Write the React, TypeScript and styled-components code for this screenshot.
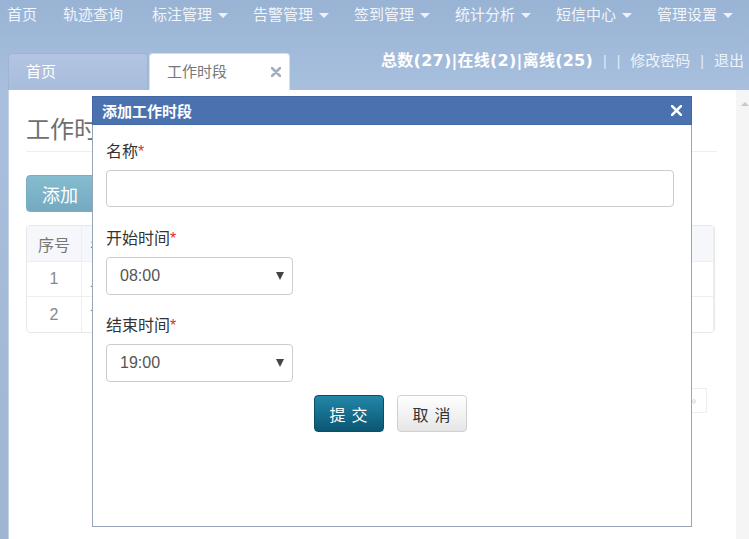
import React from "react";
import styled, { createGlobalStyle } from "styled-components";

const GlobalStyle = createGlobalStyle`
  html, body { margin: 0; padding: 0; }
  body {
    font-family: "Liberation Sans", "Noto Sans CJK SC", sans-serif;
    background: #a3bbda;
  }
  * { box-sizing: border-box; }
`;

const Page = styled.div`
  position: relative;
  width: 749px;
  height: 539px;
  overflow: hidden;
  display: flex;
  flex-direction: column;
  background: linear-gradient(#99b3d4, #a8c0de 90px, #a0b5d1);
`;

const Header = styled.header`
  height: 90px;
  display: flex;
  flex-direction: column;
`;

const NavBar = styled.nav`
  height: 30px;
  display: flex;
  align-items: center;
  padding-left: 7px;
  gap: 25px;
`;

const NavItem = styled.div<{ $extra?: number }>`
  display: flex;
  align-items: center;
  gap: 6px;
  color: #f1f5fb;
  font-size: 15px;
  line-height: 20px;
  margin-right: ${(p) => p.$extra ?? 0}px;
  white-space: nowrap;
`;

const Caret = styled.span`
  width: 0;
  height: 0;
  border-left: 5px solid transparent;
  border-right: 5px solid transparent;
  border-top: 5px solid #eef2f8;
  margin-top: 1px;
`;

const TabStrip = styled.div`
  height: 60px;
  display: flex;
  align-items: flex-end;
  padding-left: 8px;
`;

const Tab = styled.div<{ $active?: boolean }>`
  width: ${(p) => (p.$active ? 141 : 140)}px;
  height: 37px;
  margin-right: 1px;
  padding: 0 8px 0 17px;
  display: flex;
  align-items: center;
  justify-content: space-between;
  border-radius: 4px 4px 0 0;
  border: 1px solid ${(p) => (p.$active ? "#d6dfec" : "#9fb4d3")};
  border-bottom: none;
  background: ${(p) => (p.$active ? "#ffffff" : "linear-gradient(#b2c4e1, #a8bcdc)")};
  color: ${(p) => (p.$active ? "#777777" : "#ffffff")};
  font-size: 15px;
  line-height: 20px;
`;

const Status = styled.div`
  align-self: flex-start;
  margin: 22px 5px 0 auto;
  display: flex;
  align-items: center;
  line-height: 18px;
  color: #f2f6fb;
  font-size: 15px;
  white-space: nowrap;
`;

const Counts = styled.span`
  font-family: "DejaVu Sans", "Noto Sans CJK SC", sans-serif;
  font-weight: bold;
  font-size: 16px;
  letter-spacing: 0.25px;
  color: #ffffff;
`;

const Sep = styled.span<{ $tight?: boolean }>`
  margin: 0 10px 0 ${(p) => (p.$tight ? 0 : 10)}px;
  color: #e4ebf5;
  font-size: 14px;
`;

const Link = styled.span`
  color: #eef3f9;
`;

const Main = styled.main`
  flex: 1;
  display: flex;
  margin-left: 8px;
  background: #ffffff;
  border-left: 1px solid #c7d3e4;
`;

const Content = styled.div`
  flex: 1;
  padding: 0 19px 0 17px;
  display: flex;
  flex-direction: column;
`;

const Title = styled.h2`
  margin: 24px 0 0;
  padding-bottom: 5px;
  border-bottom: 1px solid #eeeeee;
  font-size: 24px;
  line-height: 32px;
  font-weight: normal;
  color: #6f6f6f;
`;

const AddButton = styled.button`
  align-self: flex-start;
  margin-top: 23px;
  width: 72px;
  height: 37px;
  padding: 0 15px;
  border: 1px solid #7aaec2;
  border-radius: 4px;
  background: linear-gradient(#86bccf, #74aac0);
  color: #ffffff;
  font-family: inherit;
  font-size: 18px;
  text-align: left;
`;

const Table = styled.table`
  margin-top: 13px;
  width: 689px;
  border-collapse: separate;
  border-spacing: 0;
  border: 1px solid #e8e8e8;
  border-radius: 4px;
  font-size: 16px;
`;

const Th = styled.th<{ $w?: number }>`
  height: 36px;
  width: ${(p) => (p.$w ? `${p.$w}px` : "auto")};
  background: #f5f7fa;
  color: #777777;
  font-weight: normal;
  text-align: ${(p) => (p.$w ? "center" : "left")};
  padding: 0 8px;
  border-right: 1px solid #eeeeee;
  border-bottom: 1px solid #eeeeee;
`;

const Td = styled.td<{ $center?: boolean; $last?: boolean }>`
  height: 35px;
  color: #888888;
  text-align: ${(p) => (p.$center ? "center" : "left")};
  padding: 0 8px;
  border-right: 1px solid #eeeeee;
  border-bottom: ${(p) => (p.$last ? "none" : "1px solid #eeeeee")};
`;

const PagerRow = styled.div`
  margin-top: 55px;
  display: flex;
  justify-content: flex-end;
  padding-right: 10px;
`;

const PageItem = styled.span`
  width: 28px;
  height: 25px;
  border: 1px solid #eeeeee;
  margin-left: -1px;
  display: flex;
  align-items: center;
  justify-content: center;
  color: #d6d6d6;
  font-size: 12px;
`;

const Scrollbar = styled.div`
  width: 13px;
  background: #f5f5f5;
  display: flex;
  justify-content: flex-end;
  padding-top: 12px;
`;

const ScrollArrow = styled.span`
  width: 0;
  height: 0;
  border-left: 4px solid transparent;
  border-right: 4px solid transparent;
  border-bottom: 4px solid #c9c9c9;
`;

const Modal = styled.div`
  position: absolute;
  left: 92px;
  top: 96px;
  width: 600px;
  height: 431px;
  background: #ffffff;
  border: 1px solid #98a6ba;
  display: flex;
  flex-direction: column;
`;

const ModalHeader = styled.div`
  height: 29px;
  margin: -1px -1px 0;
  padding: 0 9px 0 9px;
  background: #4b72af;
  border: 1px solid #4068a6;
  display: flex;
  align-items: center;
  justify-content: space-between;
  color: #ffffff;
  font-weight: bold;
  font-size: 15px;
`;

const ModalBody = styled.div`
  padding: 17px 17px 0 13px;
  display: flex;
  flex-direction: column;
`;

const Group = styled.div<{ $gap: number }>`
  margin-bottom: ${(p) => p.$gap}px;
`;

const Label = styled.label`
  display: block;
  font-size: 16px;
  line-height: 20px;
  color: #333333;
  margin-bottom: 8px;
`;

const Req = styled.span`
  color: #e0302c;
`;

const Input = styled.div`
  height: 37px;
  border: 1px solid #cccccc;
  border-radius: 4px;
`;

const Select = styled.div`
  width: 187px;
  height: 38px;
  border: 1px solid #cccccc;
  border-radius: 4px;
  padding: 0 8px 0 13px;
  display: flex;
  align-items: center;
  justify-content: space-between;
  color: #555555;
  font-size: 16px;
`;

const SelectArrow = styled.span`
  width: 0;
  height: 0;
  border-left: 4px solid transparent;
  border-right: 4px solid transparent;
  border-top: 8px solid #444444;
`;

const Actions = styled.div`
  margin-top: 13px;
  display: flex;
  justify-content: center;
  gap: 13px;
`;

const Btn = styled.button<{ $primary?: boolean }>`
  width: 70px;
  height: 37px;
  border-radius: 4px;
  font-family: inherit;
  font-size: 16px;
  letter-spacing: 6px;
  padding: 0 0 0 6px;
  border: 1px solid ${(p) => (p.$primary ? "#0b4e66" : "#d0d0d0")};
  background: ${(p) =>
    p.$primary ? "linear-gradient(#2386a8, #0b5672)" : "linear-gradient(#ffffff, #e6e6e6)"};
  color: ${(p) => (p.$primary ? "#ffffff" : "#333333")};
`;

const Cross = ({ size, color, width }: { size: number; color: string; width: number }) => (
  <svg width={size} height={size} viewBox="0 0 10 10">
    <path d="M1 1 L9 9 M9 1 L1 9" stroke={color} strokeWidth={width} strokeLinecap="round" />
  </svg>
);

const navItems: { label: string; drop?: boolean; extra?: number }[] = [
  { label: "首页", extra: 1 },
  { label: "轨迹查询", extra: 4 },
  { label: "标注管理", drop: true },
  { label: "告警管理", drop: true },
  { label: "签到管理", drop: true },
  { label: "统计分析", drop: true },
  { label: "短信中心", drop: true },
  { label: "管理设置", drop: true },
];

export default function App() {
  return (
    <>
      <GlobalStyle />
      <Page>
        <Header>
          <NavBar>
            {navItems.map((n) => (
              <NavItem key={n.label} $extra={n.extra}>
                {n.label}
                {n.drop && <Caret />}
              </NavItem>
            ))}
          </NavBar>
          <TabStrip>
            <Tab>首页</Tab>
            <Tab $active>
              工作时段
              <Cross size={10} color="#a3afc0" width={2.6} />
            </Tab>
            <Status>
              <Counts>总数(27)|在线(2)|离线(25)</Counts>
              <Sep>|</Sep>
              <Sep $tight>|</Sep>
              <Link>修改密码</Link>
              <Sep>|</Sep>
              <Link>退出</Link>
            </Status>
          </TabStrip>
        </Header>
        <Main>
          <Content>
            <Title>工作时段</Title>
            <AddButton>添加</AddButton>
            <Table>
              <thead>
                <tr>
                  <Th $w={55}>序号</Th>
                  <Th>名称</Th>
                </tr>
              </thead>
              <tbody>
                <tr>
                  <Td $center>1</Td>
                  <Td>上午</Td>
                </tr>
                <tr>
                  <Td $center $last>2</Td>
                  <Td $last>下午</Td>
                </tr>
              </tbody>
            </Table>
            <PagerRow>
              <PageItem>«</PageItem>
              <PageItem>1</PageItem>
              <PageItem>»</PageItem>
            </PagerRow>
          </Content>
          <Scrollbar>
            <ScrollArrow />
          </Scrollbar>
        </Main>
        <Modal>
          <ModalHeader>
            添加工作时段
            <Cross size={11} color="#ffffff" width={2.4} />
          </ModalHeader>
          <ModalBody>
            <Group $gap={22}>
              <Label>
                名称<Req>*</Req>
              </Label>
              <Input />
            </Group>
            <Group $gap={21}>
              <Label>
                开始时间<Req>*</Req>
              </Label>
              <Select>
                08:00
                <SelectArrow />
              </Select>
            </Group>
            <Group $gap={0}>
              <Label>
                结束时间<Req>*</Req>
              </Label>
              <Select>
                19:00
                <SelectArrow />
              </Select>
            </Group>
            <Actions>
              <Btn $primary>提交</Btn>
              <Btn>取消</Btn>
            </Actions>
          </ModalBody>
        </Modal>
      </Page>
    </>
  );
}
